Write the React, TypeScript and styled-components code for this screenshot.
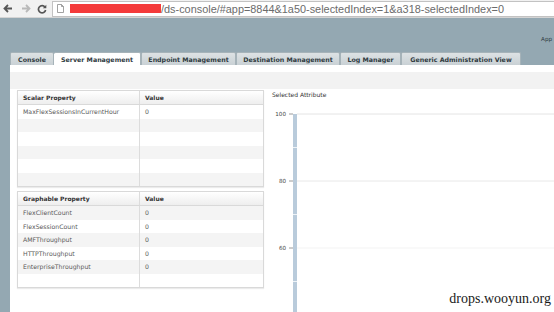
import React from "react";
import styled, { createGlobalStyle } from "styled-components";

const GlobalStyle = createGlobalStyle`
  html, body {
    margin: 0;
    padding: 0;
    background: #94a8b2;
  }
  #root {
    width: 554px;
    height: 312px;
    overflow: hidden;
  }
`;

const Screen = styled.div`
  width: 554px;
  height: 312px;
  display: flex;
  flex-direction: column;
  overflow: hidden;
  position: relative;
  font-family: "DejaVu Sans", Verdana, sans-serif;
`;

const BrowserBar = styled.div`
  height: 18px;
  flex: none;
  display: flex;
  align-items: center;
  background: #f1f1f1;
  border-bottom: 1px solid #d4d4d4;
  box-sizing: border-box;
`;

const NavButton = styled.div<{ $dim?: boolean; $gap?: number }>`
  width: 10px;
  height: 10px;
  margin-left: ${(p) => p.$gap ?? 3}px;
  display: flex;
  align-items: center;
  justify-content: center;
  color: ${(p) => (p.$dim ? "#b9b9b9" : "#555")};
`;

const UrlBox = styled.div`
  flex: 1;
  height: 16px;
  margin-left: 5px;
  display: flex;
  align-items: center;
  background: #fff;
  border: 1px solid #c2c2c2;
  border-right: none;
  box-sizing: border-box;
  white-space: nowrap;
  overflow: hidden;
  font-family: "Liberation Sans", Arial, sans-serif;
  font-size: 10.9px;
  color: #6b6b6b;
`;

const PageIcon = styled.svg`
  margin-left: 4px;
  flex: none;
`;

const Redacted = styled.span`
  width: 91px;
  height: 9px;
  margin-left: 6px;
  background: #f43a3a;
  flex: none;
`;

const Page = styled.div`
  flex: 1;
  display: flex;
  flex-direction: column;
  padding-left: 10px;
  background: #94a8b2;
  min-height: 0;
`;

const HeaderRow = styled.div`
  height: 34px;
  flex: none;
  box-sizing: border-box;
  padding: 18px 2px 0 0;
  text-align: right;
  font-size: 5.6px;
  color: #2e3a40;
`;

const TabBar = styled.div`
  height: 13px;
  flex: none;
  display: flex;
  align-items: stretch;
`;

const Tab = styled.div<{ $width: number; $active?: boolean }>`
  width: ${(p) => p.$width}px;
  box-sizing: border-box;
  display: flex;
  align-items: center;
  justify-content: center;
  border: 1px solid #a6b3b9;
  border-bottom: none;
  border-left: ${(p) => (p.$active ? "none" : "1px solid #a6b3b9")};
  border-radius: 2px 2px 0 0;
  background: ${(p) =>
    p.$active ? "#ffffff" : "linear-gradient(#dde2e4, #c9d1d5)"};
  font-size: 6.3px;
  font-weight: bold;
  color: #2f3a3f;
  white-space: nowrap;
`;

const Content = styled.div`
  flex: 1;
  background: #fff;
  display: flex;
  flex-direction: column;
  min-height: 0;
`;

const Band = styled.div`
  height: 17px;
  margin-top: 7px;
  flex: none;
  background: #f2f2f2;
`;

const Body = styled.div`
  flex: 1;
  display: flex;
  min-height: 0;
`;

const LeftColumn = styled.div`
  width: 255px;
  flex: none;
  box-sizing: border-box;
  padding: 1px 0 0 7px;
  display: flex;
  flex-direction: column;
  gap: 4px;
`;

const TableRow = styled.div`
  display: flex;
  align-items: flex-end;
`;

const Table = styled.div`
  width: 247px;
  flex: none;
  border: 1px solid #d9d9d9;
  box-shadow: 0 1px 1px rgba(0, 0, 0, 0.08);
  box-sizing: border-box;
  background: #fff;
`;

const Row = styled.div<{ $head?: boolean; $shaded?: boolean; $h?: number }>`
  height: ${(p) => p.$h ?? 13.5}px;
  display: grid;
  grid-template-columns: 122px 1fr;
  background: ${(p) =>
    p.$head
      ? "linear-gradient(#ffffff, #eeeeee)"
      : p.$shaded
      ? "#f4f4f4"
      : "#ffffff"};
  border-bottom: ${(p) => (p.$head ? "1px solid #d9d9d9" : "none")};
  box-sizing: border-box;
`;

const Cell = styled.div<{ $head?: boolean }>`
  display: flex;
  align-items: center;
  padding-left: 5px;
  border-right: 1px solid #dcdcdc;
  font-size: ${(p) => (p.$head ? "6px" : "6.2px")};
  font-weight: ${(p) => (p.$head ? "bold" : "normal")};
  color: ${(p) => (p.$head ? "#333" : "#595959")};
  white-space: nowrap;
  overflow: hidden;
  &:last-child {
    border-right: none;
  }
`;

const ScrollThumb = styled.div`
  width: 3px;
  height: 10px;
  margin: 0 0 3px 2px;
  background: linear-gradient(90deg, #c4c4c4, #8c8c8c);
`;

const RightColumn = styled.div`
  flex: 1;
  display: flex;
  flex-direction: column;
  padding: 2px 0 0 7px;
  min-width: 0;
`;

const ChartTitle = styled.div`
  height: 9px;
  font-size: 6px;
  color: #333;
  white-space: nowrap;
`;

const Chart = styled.svg`
  display: block;
  margin-left: -7px;
`;

const Watermark = styled.div`
  position: absolute;
  right: 3px;
  bottom: 5px;
  font-family: "Liberation Serif", "Times New Roman", serif;
  font-size: 14px;
  color: #1a1a1a;
`;

type Prop = { name: string; value: string };

const scalar: Prop[] = [{ name: "MaxFlexSessionsInCurrentHour", value: "0" }];
const graphable: Prop[] = [
  { name: "FlexClientCount", value: "0" },
  { name: "FlexSessionCount", value: "0" },
  { name: "AMFThroughput", value: "0" },
  { name: "HTTPThroughput", value: "0" },
  { name: "EnterpriseThroughput", value: "0" },
];

const tabs = [
  { label: "Console", width: 44 },
  { label: "Server Management", width: 87, active: true },
  { label: "Endpoint Management", width: 95 },
  { label: "Destination Management", width: 104 },
  { label: "Log Manager", width: 61 },
  { label: "Generic Administration View", width: 120 },
];

function PropTable({
  title,
  rows,
  shadeOdd,
}: {
  title: string;
  rows: Prop[];
  shadeOdd?: boolean;
}) {
  const filled = [...rows];
  while (filled.length < 6) filled.push({ name: "", value: "" });
  return (
    <Table>
      <Row $head $h={14}>
        <Cell $head>{title}</Cell>
        <Cell $head>Value</Cell>
      </Row>
      {filled.map((r, i) => (
        <Row key={i} $shaded={shadeOdd ? i % 2 === 0 : i % 2 === 1}>
          <Cell>{r.name}</Cell>
          <Cell>{r.value}</Cell>
        </Row>
      ))}
    </Table>
  );
}

function AttributeChart() {
  const lines = [
    { y: 14, label: "100", color: "#e4e4e4" },
    { y: 81, label: "80", color: "#e8e8e8" },
    { y: 148, label: "60", color: "#f3f3f3" },
  ];
  return (
    <Chart width={289} height={212}>
      {lines.map((l) => (
        <g key={l.label}>
          <line x1={32} x2={289} y1={l.y} y2={l.y} stroke={l.color} strokeWidth={1} />
          <line x1={24} x2={28} y1={l.y} y2={l.y} stroke="#9a9a9a" strokeWidth={1} />
          <text
            x={21}
            y={l.y + 2}
            textAnchor="end"
            fontSize={5.6}
            fill="#444"
            fontFamily="DejaVu Sans, sans-serif"
          >
            {l.label}
          </text>
        </g>
      ))}
      <rect x={28} y={14} width={4} height={198} fill="#b9cbdb" />
      {[47, 114, 181].map((y) => (
        <rect key={y} x={28} y={y} width={4} height={1} fill="#eef3f7" />
      ))}
    </Chart>
  );
}

export default function App() {
  return (
    <Screen>
      <GlobalStyle />
      <BrowserBar>
        <NavButton>
          <svg width="10" height="9" viewBox="0 0 10 9">
            <path d="M9 4.5H2M5 1L1.5 4.5L5 8" stroke="currentColor" strokeWidth="1.8" fill="none" />
          </svg>
        </NavButton>
        <NavButton $dim $gap={8}>
          <svg width="10" height="9" viewBox="0 0 10 9">
            <path d="M1 4.5H8M5 1L8.5 4.5L5 8" stroke="currentColor" strokeWidth="1.8" fill="none" />
          </svg>
        </NavButton>
        <NavButton $gap={6}>
          <svg width="10" height="10" viewBox="0 0 10 10">
            <path d="M8 3.2A3.6 3.6 0 1 0 8.6 6" stroke="currentColor" strokeWidth="1.7" fill="none" />
            <path d="M9.3 0.8V4.3H5.8Z" fill="currentColor" />
          </svg>
        </NavButton>
        <UrlBox>
          <PageIcon width="7" height="9" viewBox="0 0 7 9">
            <path d="M0.5 0.5H4.5L6.5 2.5V8.5H0.5Z M4.5 0.5V2.5H6.5" stroke="#8a8a8a" strokeWidth="0.8" fill="#fff" />
          </PageIcon>
          <Redacted />
          /ds-console/#app=8844&amp;1a50-selectedIndex=1&amp;a318-selectedIndex=0
        </UrlBox>
      </BrowserBar>
      <Page>
        <HeaderRow>App</HeaderRow>
        <TabBar>
          {tabs.map((t) => (
            <Tab key={t.label} $width={t.width} $active={t.active}>
              {t.label}
            </Tab>
          ))}
        </TabBar>
        <Content>
          <Band />
          <Body>
            <LeftColumn>
              <PropTable title="Scalar Property" rows={scalar} />
              <TableRow>
                <PropTable title="Graphable Property" rows={graphable} shadeOdd />
                <ScrollThumb />
              </TableRow>
            </LeftColumn>
            <RightColumn>
              <ChartTitle>Selected Attribute</ChartTitle>
              <AttributeChart />
            </RightColumn>
          </Body>
        </Content>
      </Page>
      <Watermark>drops.wooyun.org</Watermark>
    </Screen>
  );
}
